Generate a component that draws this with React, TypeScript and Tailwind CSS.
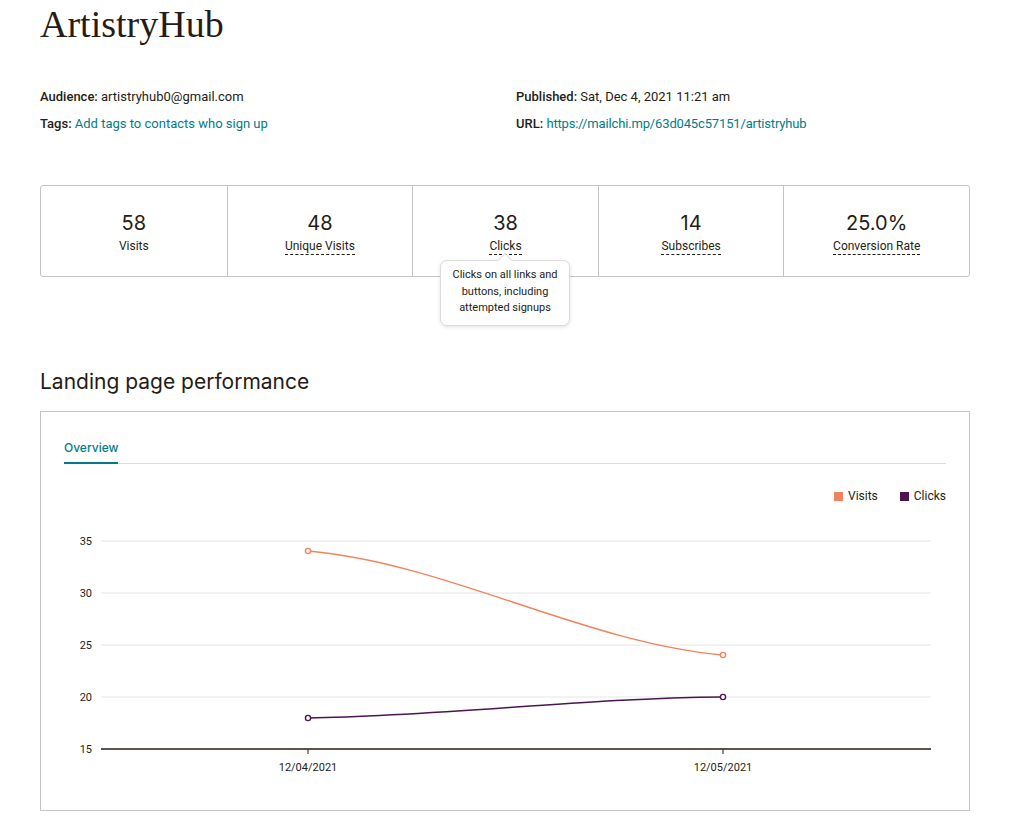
import React from "react";

const font = { fontFamily: "Roboto, 'Noto Sans', sans-serif" };

function Stat({ value, label, dashed }: { value: string; label: string; dashed?: boolean }) {
  return (
    <div className="flex flex-col items-center justify-center pt-[4px]">
      <div className="text-[20px] leading-[24px] text-[#241c15]" style={{ fontFamily: "Inter, sans-serif" }}>
        {value}
      </div>
      <div
        className={
          "mt-[3px] text-[12px] leading-[16px] text-[#241c15] " +
          (dashed ? "border-b border-dashed border-[#241c15]" : "border-b border-transparent")
        }
      >
        {label}
      </div>
    </div>
  );
}

function Chart() {
  const ys = [
    { v: 35, y: 541 },
    { v: 30, y: 593 },
    { v: 25, y: 645 },
    { v: 20, y: 697 },
  ];
  const ox = 40;
  const oy = 411;
  return (
    <svg width="928" height="397" viewBox={`${ox + 1} ${oy + 1} 928 397`} className="block">
      {ys.map((g) => (
        <g key={g.v}>
          <line x1={101} x2={931} y1={g.y} y2={g.y} stroke="#e6e6e6" strokeWidth={1} />
          <text x={92} y={g.y + 4} textAnchor="end" fontSize={11} fill="#241c15" fontFamily="Roboto, sans-serif">
            {g.v}
          </text>
        </g>
      ))}
      <text x={92} y={753} textAnchor="end" fontSize={11} fill="#241c15" fontFamily="Roboto, sans-serif">
        15
      </text>
      <line x1={101} x2={931} y1={749} y2={749} stroke="#241c15" strokeWidth={1.5} />
      <line x1={308} x2={308} y1={749} y2={754} stroke="#241c15" strokeWidth={1} />
      <line x1={723} x2={723} y1={749} y2={754} stroke="#241c15" strokeWidth={1} />
      <text x={308} y={771} textAnchor="middle" fontSize={11} fill="#241c15" fontFamily="Roboto, sans-serif">
        12/04/2021
      </text>
      <text x={723} y={771} textAnchor="middle" fontSize={11} fill="#241c15" fontFamily="Roboto, sans-serif">
        12/05/2021
      </text>
      <path d="M308 551 C 446 563, 585 643, 723 655" fill="none" stroke="#f0845c" strokeWidth={1.5} />
      <path d="M308 718 C 446 716, 585 698, 723 697" fill="none" stroke="#4b1650" strokeWidth={1.5} />
      <circle cx={308} cy={551} r={2.6} fill="#fff" stroke="#f0845c" strokeWidth={1.4} />
      <circle cx={723} cy={655} r={2.6} fill="#fff" stroke="#f0845c" strokeWidth={1.4} />
      <circle cx={308} cy={718} r={2.6} fill="#fff" stroke="#4b1650" strokeWidth={1.4} />
      <circle cx={723} cy={697} r={2.6} fill="#fff" stroke="#4b1650" strokeWidth={1.4} />
    </svg>
  );
}

export default function App() {
  return (
    <div className="min-h-[839px] w-[1012px] bg-white text-[#241c15]" style={font}>
      <div className="px-[40px] w-[1010px]">
        <h1
          className="pt-[3px] text-[38px] leading-[42px] text-[#241c15]"
          style={{ fontFamily: "'Liberation Serif', 'DejaVu Serif', serif" }}
        >
          ArtistryHub
        </h1>

        <div className="mt-[44px] flex text-[13px] leading-[16px]">
          <div className="w-[476px] flex flex-col gap-[11px]">
            <div>
              <span className="font-medium">Audience:</span> artistryhub0@gmail.com
            </div>
            <div>
              <span className="font-medium">Tags:</span>{" "}
              <span className="text-[#007c89]">Add tags to contacts who sign up</span>
            </div>
          </div>
          <div className="flex flex-col gap-[11px]">
            <div>
              <span className="font-medium">Published:</span> Sat, Dec 4, 2021 11:21 am
            </div>
            <div>
              <span className="font-medium">URL:</span>{" "}
              <span className="text-[#007c89] tracking-[-0.15px]">https://mailchi.mp/63d045c57151/artistryhub</span>
            </div>
          </div>
        </div>

        <div className="relative mt-[53px] grid h-[92px] w-[930px] grid-cols-5 rounded-[3px] border border-[#c4c4c4]">
          <div className="flex items-center justify-center">
            <Stat value="58" label="Visits" />
          </div>
          <div className="border-l border-[#c4c4c4] flex items-center justify-center">
            <Stat value="48" label="Unique Visits" dashed />
          </div>
          <div className="border-l border-[#c4c4c4] flex items-center justify-center">
            <Stat value="38" label="Clicks" dashed />
          </div>
          <div className="border-l border-[#c4c4c4] flex items-center justify-center">
            <Stat value="14" label="Subscribes" dashed />
          </div>
          <div className="border-l border-[#c4c4c4] flex items-center justify-center">
            <Stat value="25.0%" label="Conversion Rate" dashed />
          </div>

          <div className="absolute left-[399px] top-[74px] w-[130px] rounded-[7px] border border-[#dcdcdc] bg-white px-[8px] pt-[6px] pb-[8px] text-center text-[11px] leading-[16.5px] text-[#241c15] shadow-[0_1px_4px_rgba(0,0,0,0.12)]">
            <div className="absolute left-[59px] top-[-6px] h-[10px] w-[10px] rotate-45 border-l border-t border-[#dcdcdc] bg-white" />
            Clicks on all links and buttons, including attempted signups
          </div>
        </div>

        <h2 className="mt-[93px] text-[21px] leading-[24px] text-[#241c15]" style={{ fontFamily: "Inter, sans-serif" }}>
          Landing page performance
        </h2>

        <div className="mt-[17px] h-[400px] w-[930px] border border-[#c4c4c4]">
          <div className="mx-[23px] mt-[28px] flex border-b border-[#dcdcdc]">
            <div
              className="border-b-2 border-[#007c89] pb-[6px] text-[12px] leading-[16px] font-medium text-[#007c89] -mb-[1px]"
              style={{ fontFamily: "Inter, sans-serif" }}
            >
              Overview
            </div>
          </div>
          <div className="relative">
            <div className="absolute right-[23px] top-[24px] flex items-center text-[12px] leading-[16px]">
              <span className="mr-[5px] inline-block h-[9px] w-[9px] bg-[#f0845c]" />
              <span>Visits</span>
              <span className="ml-[22px] mr-[5px] inline-block h-[9px] w-[9px] bg-[#4b1650]" />
              <span>Clicks</span>
            </div>
          </div>
          <div className="-mt-[52px]">
            <Chart />
          </div>
        </div>
      </div>
    </div>
  );
}
